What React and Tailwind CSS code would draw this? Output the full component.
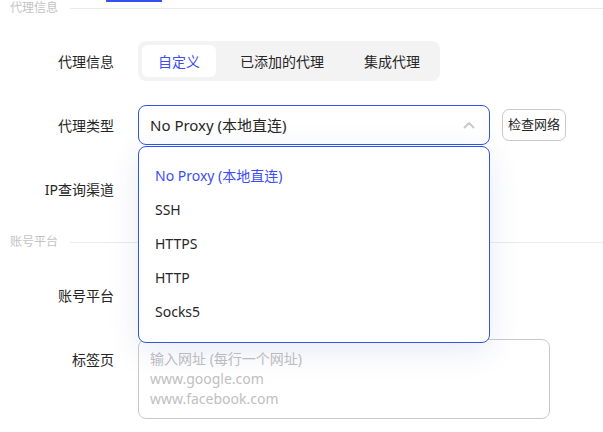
const font = { fontFamily: '"Noto Sans", "Noto Sans CJK SC", sans-serif' };

function SectionTitle({ title, bar }) {
  return (
    <div className="relative flex h-[16px] items-center pl-[10px]">
      {bar && <div className="absolute left-[106px] top-0 h-[2px] w-[56px] bg-[#3450f0]" />}
      <span className="text-[12px] leading-none text-[#c3c3c3]">{title}</span>
      <div className="ml-[12px] h-px flex-1 bg-[#ebebeb]" />
    </div>
  );
}

function Row({ label, children, top }) {
  return (
    <div className={`flex ${top ? "items-start" : "items-center"} gap-[24px]`}>
      <div className={`w-[114px] text-right text-[14px] text-[#262626] ${top ? "pt-[10px]" : ""}`}>
        {label}
      </div>
      {children}
    </div>
  );
}

const options = ["No Proxy (本地直连)", "SSH", "HTTPS", "HTTP", "Socks5"];

export default function App() {
  return (
    <div className="relative h-[432px] w-[603px] overflow-hidden bg-white" style={font}>
      <SectionTitle title="代理信息" bar />

      <div className="mt-[25px]">
        <Row label="代理信息">
          <div className="flex gap-[8px] rounded-[8px] bg-[#f3f3f3] p-[4px] text-[14px]">
            <div className="flex h-[32px] items-center rounded-[6px] bg-white px-[16px] text-[#3b4ef5]">自定义</div>
            <div className="flex h-[32px] items-center px-[16px] text-[#262626]">已添加的代理</div>
            <div className="flex h-[32px] items-center px-[16px] text-[#262626]">集成代理</div>
          </div>
        </Row>
      </div>

      <div className="mt-[24px]">
        <Row label="代理类型">
          <div className="flex h-[40px] w-[352px] items-center justify-between rounded-[8px] border border-[#2f55eb] pl-[11px] pr-[14px] text-[15px] text-[#262626]">
            <span>No Proxy (本地直连)</span>
            <svg width="12" height="8" viewBox="0 0 12 8" fill="none">
              <polyline points="1.5,6.5 6,2 10.5,6.5" stroke="#c8c8c8" strokeWidth="1.8" strokeLinecap="round" strokeLinejoin="round" />
            </svg>
          </div>
          <button className="ml-[-12px] flex h-[32px] items-center rounded-[7px] border border-[#c9c9cc] px-[5px] text-[13px] text-[#262626]">
            检查网络
          </button>
        </Row>
      </div>

      <div className="mt-[24px]">
        <Row label="IP查询渠道">
          <div className="h-[40px] w-[352px] rounded-[8px] border border-[#d0d0d4]" />
        </Row>
      </div>

      <div className="mt-[25px]">
        <SectionTitle title="账号平台" />
      </div>

      <div className="mt-[25px]">
        <Row label="账号平台">
          <div className="h-[40px] w-[352px] rounded-[8px] border border-[#d0d0d4]" />
        </Row>
      </div>

      <div className="mt-[24px]">
        <Row label="标签页" top>
          <div className="h-[80px] w-[412px] rounded-[8px] border border-[#c9c9cc] px-[11px] pt-[9px] text-[14px] leading-[20px] text-[#c0c0c0]">
            <div>输入网址 (每行一个网址)</div>
            <div>www.google.com</div>
            <div>www.facebook.com</div>
          </div>
        </Row>
      </div>

      <div className="absolute left-[138px] top-[146px] w-[352px] rounded-[8px] border border-[#2f55eb] bg-white pb-[14px] pt-[11px] shadow-[0_8px_32px_rgba(40,60,180,0.1)]">
        {options.map((o, i) => (
          <div
            key={o}
            className={`flex h-[34px] items-center px-[16px] text-[14px] ${i === 0 ? "text-[#3b4ef5]" : "text-[#262626]"}`}
          >
            {o}
          </div>
        ))}
      </div>
    </div>
  );
}
